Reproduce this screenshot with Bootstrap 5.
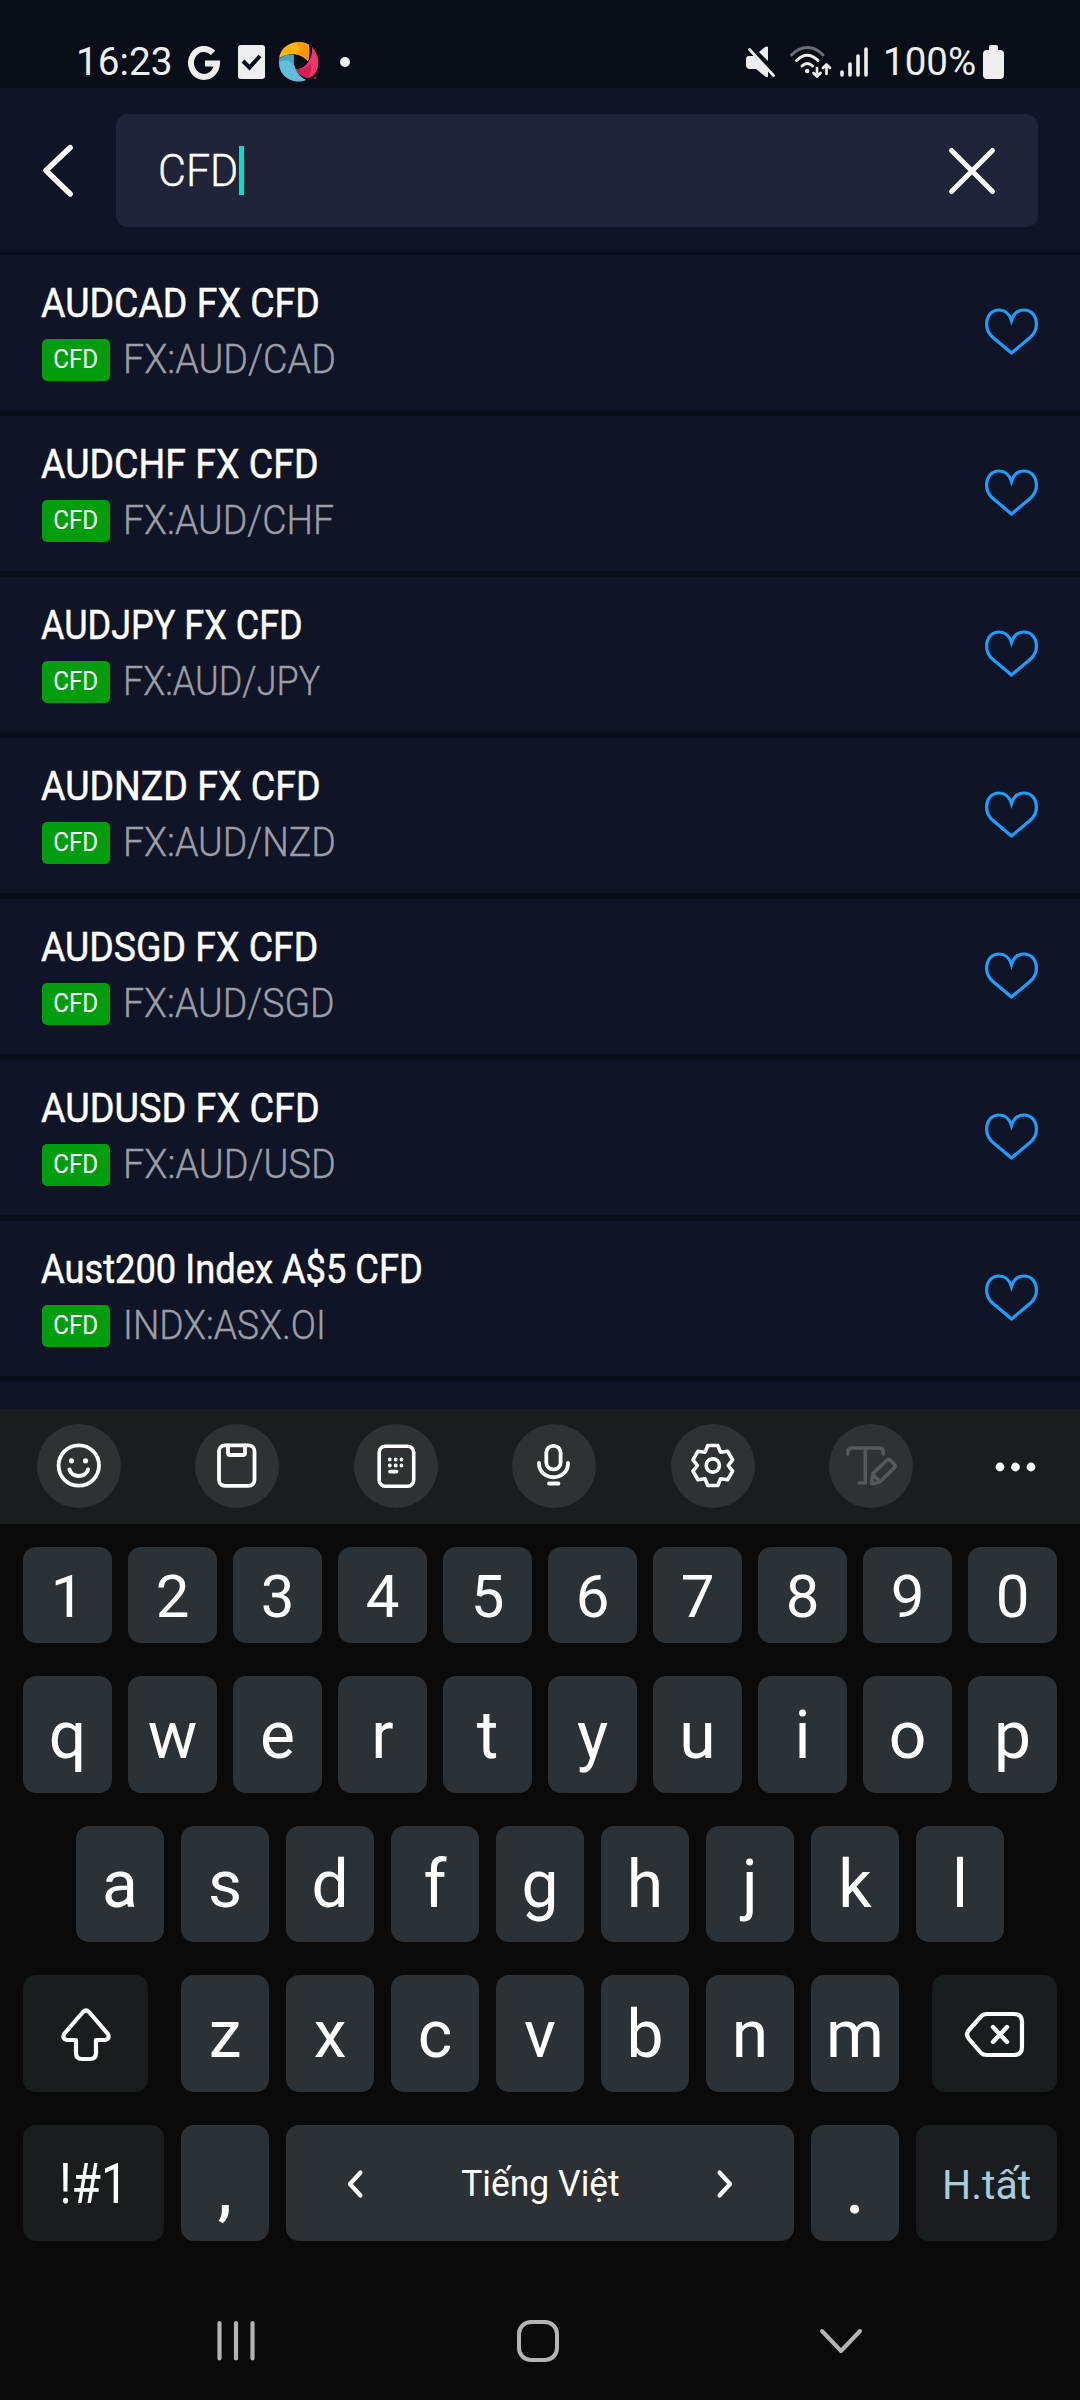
<!DOCTYPE html>
<html lang="vi">
<head>
<meta charset="utf-8">
<meta name="viewport" content="width=device-width, initial-scale=1">
<title>CFD search</title>
<link rel="stylesheet" href="https://cdn.jsdelivr.net/npm/bootstrap@5.3.0/dist/css/bootstrap.min.css">
<style>
body{width:1080px;height:2400px;margin:0;background:#0a0a0a;color:#fff;font-family:Roboto,"Liberation Sans",sans-serif;overflow:hidden;line-height:1.172}
svg{display:block;flex:none;overflow:visible}
.ln{fill:none;stroke:currentColor;stroke-linecap:round;stroke-linejoin:round}
.statusbar{height:88px;background:#0a0e18;color:#eee;font-size:39.5px;padding:36px 76px 0 76px}
.statusbar .inner-row{height:52px}
.searchbar{height:167px;background:#0f1426;border-bottom:3px solid #0a0e18;padding:26px 42px 25px 43px}
.search-box{width:922px;height:113px;background:#202438;border-radius:12px;padding:0 43px 0 42px}
.query{font-size:45px;font-weight:300;-webkit-text-stroke:.4px #fff;border:0;display:inline-block;width:81px;padding-top:2px;transform:scaleX(.955);transform-origin:left}
.caret{width:5px;height:49px;background:#00e0c8}
.results{height:1154px;overflow:hidden;background:#0f1426}
.result{height:161px;border-bottom:6px solid #0a0e18;padding:25px 42px 0 42px}
.narrow{display:inline-block;white-space:nowrap;transform-origin:left}
.title{font-size:40.5px;line-height:47px;margin-left:-1px;-webkit-text-stroke:.5px #fff}
.ticker{font-size:40.5px;line-height:47px;font-weight:300;color:#9c9ea6;-webkit-text-stroke:.4px #9c9ea6;margin-left:13px}
.tag{width:68px;height:42px;border-radius:5px;background:#009e0e;font-size:25.5px}
.tag span{transform:scaleX(.95)}
.heart{color:#1e9fff;margin-top:28px}
.toolbar-strip{height:115px;background:#191d1d;padding:15px 37px 0 37px}
.tool{width:84px;height:84px;border-radius:50%;background:#2f3232;margin-right:74.4px;flex:none}
.tool svg{width:84px;height:84px}
.keys{padding:23px 23px 0}
.krow{margin-bottom:33px;height:116px}
.key{background:#2c3135;border-radius:13px;width:88px;height:100%;font-size:66px;padding-top:2px;display:flex;align-items:center;justify-content:center;flex:none}
.digits{height:96px}
.digits .key{font-size:60px;padding-top:5px}
.wide10 .key{width:89px}
.fnkey{background:#191d1d}
.krow .w125{width:125px}.krow .w141{width:141px}.krow .w508{width:508px}
.g16{gap:16px}.g17{gap:17px}
.krow .punct{padding-top:16px;font-weight:500}
.softnav{color:#b4b4b4;height:126px;padding:46px 0 0 217px}
</style>
<script src="https://cdn.jsdelivr.net/npm/bootstrap@5.3.0/dist/js/bootstrap.bundle.min.js"></script>
</head>
<body>
<div class="statusbar">
 <div class="inner-row d-flex align-items-center justify-content-between">
  <div class="d-flex align-items-center">
   <span class="narrow" style="width:112px;transform:scaleX(.98)">16:23</span>
   <svg width="33" height="34" viewBox="0 0 33 34"><path class="ln" style="stroke-linecap:butt;stroke-linejoin:miter" stroke-width="6" d="M25 7.800A13 14 0 1 0 29 18.500H17"/></svg>
   <svg width="27" height="34" viewBox="0 0 27 34" style="margin-left:17px"><rect width="27" height="34" rx="3" fill="#eee"/><path d="M5 16L11.500 22.500L22 11" fill="none" stroke="#0a0e18" stroke-width="4"/></svg>
   <svg width="40" height="40" viewBox="0 0 40 40" style="margin-left:14px"><path fill="#fdb412" d="M0 16C2 5 11 0 20 0Q26 0 30 3Q31 12 29 19C21 10 9 11 0 16Z"/><path fill="#ff9800" d="M17 0Q26 0 30 3Q31 12 29 19Q24 14 17 12Q24 7 17 0Z"/><path fill="#ef346f" d="M33 5C40 12 41 23 37 30Q34 35 29 36Q21 35 16.500 27C24 28 34 20 33 5Z"/><path fill="#d42050" d="M16.500 27Q25 28 32 22Q33 30 29 36Q21 35 16.500 27Z"/><path fill="#61bfdb" d="M0 17Q7 12 15 13C13 22 17 33 27 38C15 43 0 35 0 21Z"/><path fill="#43a7c2" d="M0 17Q7 12 15 13Q14 18 15 24Q9 15 0 20Z"/><path d="M35 36h2.500" stroke="#d42050" stroke-width="1.500"/></svg>
   <svg width="10" height="10" style="margin-left:21px"><circle cx="5" cy="5" r="5" fill="#eee"/></svg>
  </div>
  <div class="d-flex align-items-center">
   <svg width="30" height="32" viewBox="0 0 30 32"><path fill="#eee" d="M3 10H8L22 24V31H20L10 23H3Q0 22 0 19V13Q0 10 3 10ZM13 6L19 1Q21 0 22 1V15Z"/><path class="ln" stroke-width="2.800" d="M3.500 3.500L27.500 29.500"/></svg>
   <svg width="42" height="32" viewBox="0 0 42 32" style="margin-left:14px"><g class="ln" stroke-width="3"><path stroke="#6c6e74" d="M1.500 9C11 -1 24 -1 33 9"/><path d="M6.500 14.500Q17.200 4 28 14.500M12 20Q17.200 15 22.500 20"/></g><circle cx="17.200" cy="25" r="2.200" fill="#eee"/><path class="ln" stroke-width="2.700" d="M27 22V30M23.500 27L27 30.500L30.500 27M36.500 28V19M33 22L36.500 18.500L40 22"/></svg>
   <svg width="28" height="32" viewBox="0 0 28 32" style="margin-left:8px"><path class="ln" stroke-width="3.600" d="M2 26V29M10 18V29M18 10V29M26 3V29"/></svg>
   <span class="narrow" style="margin-left:15px;width:100px;transform:scaleX(.975)">100%</span>
   <svg width="21" height="34" viewBox="0 0 21 34"><path fill="#eee" d="M6 5V2Q6 0 8 0H13Q15 0 15 2V5H17Q21 5 21 9V30Q21 34 17 34H4Q0 34 0 30V9Q0 5 4 5Z"/></svg>
  </div>
 </div>
</div>

<div class="searchbar d-flex align-items-center justify-content-between">
 <svg width="30" height="52" viewBox="0 0 30 52"><path class="ln" stroke-width="5.400" d="M27.200 2.500L3 25.500L27.200 49"/></svg>
 <div class="search-box d-flex align-items-center justify-content-between">
  <div class="d-flex align-items-center"><span class="query">CFD</span><span class="caret"></span></div>
  <svg width="46" height="46" viewBox="0 0 46 46"><path class="ln" stroke-width="5" d="M2.500 2.500L43.500 43.500M43.500 2.500L2.500 43.500"/></svg>
 </div>
</div>

<div class="results" id="results"></div>

<div class="toolbar-strip d-flex">
 <div class="tool"><svg viewBox="0 0 84 84"><g class="ln" stroke-width="3.800"><circle cx="41.800" cy="41.500" r="20.200"/><path d="M32.500 45.500C34.500 54 49 54 51 45.500" stroke-width="4"/></g><circle cx="34.500" cy="36.800" r="2.600" fill="#fff"/><circle cx="48.500" cy="36.800" r="2.600" fill="#fff"/></svg></div>
 <div class="tool"><svg viewBox="0 0 84 84"><g class="ln" stroke-width="3.800"><rect x="24" y="21.300" width="35.500" height="40.500" rx="6"/><path d="M33 21.500V29Q33 31 35 31H48Q50 31 50 29V21.500"/></g></svg></div>
 <div class="tool"><svg viewBox="0 0 84 84"><rect class="ln" stroke-width="3.600" x="25.200" y="22.300" width="34.500" height="40" rx="6"/><path class="ln" stroke-width="3.800" d="M35.800 35.500h.01M41.700 35.500h.01M47.500 35.500h.01M35.800 41.500h.01M41.700 41.500h.01M47.500 41.500h.01M36 47.600H42.500"/></svg></div>
 <div class="tool"><svg viewBox="0 0 84 84"><g class="ln" stroke-width="3.800"><rect x="34.300" y="21.800" width="14.300" height="23.500" rx="6.800"/><path d="M27 39C27 58 56 58 56 39M37 59.500H46.500"/></g></svg></div>
 <div class="tool"><svg viewBox="0 0 84 84"><g class="ln" stroke-width="3.600" transform="translate(41.800 41.500)"><path d="M-5 -20H5L7.700 -13.300L14.800 -14.300L19.800 -5.700L15.400 0L19.800 5.700L14.800 14.300L7.700 13.300L5 20H-5L-7.700 13.300L-14.800 14.300L-19.800 5.700L-15.400 0L-19.800 -5.700L-14.800 -14.300L-7.700 -13.300Z"/><circle r="6.600"/></g></svg></div>
 <div class="tool"><svg viewBox="0 0 84 84" style="color:#565859"><g class="ln" stroke-width="3.600"><path d="M18.800 30V28Q18.800 24 23 24H50Q54.200 24 54.200 28V30M36.300 24V59M29.800 59H36.300M42.500 59.500L44 49.500L57.500 36.500Q59.500 34.500 61.500 36.500L65 40Q67 42 65 44L52 57Q50 59 42.500 59.500ZM44.500 51L50.500 57"/></g></svg></div>
 <svg width="84" height="84" viewBox="0 0 84 84" style="margin-left:-13.500px"><g fill="#fff"><circle cx="26" cy="43" r="4.400"/><circle cx="41.500" cy="43" r="4.400"/><circle cx="57" cy="43" r="4.400"/></g></svg>
</div>

<div class="keys">
 <div class="krow digits wide10 d-flex g16" data-keys="1234567890"></div>
 <div class="krow wide10 d-flex g16" data-keys="qwertyuiop" style="height:117px"></div>
 <div class="krow d-flex justify-content-center g17" data-keys="asdfghjkl"></div>
 <div class="krow d-flex justify-content-between" style="height:117px">
  <div class="key fnkey w125"><svg width="50" height="54" viewBox="0 0 50 54"><path class="ln" stroke-width="4.200" d="M22 4Q25 1 28 4L47 26Q49 31 44 32H35V45Q35 51 29 51H21Q15 51 15 45V32H6Q1 31 3 26Z"/></svg></div>
  <div class="d-flex g17" data-keys="zxcvbnm"></div>
  <div class="key fnkey w125"><svg width="60" height="46" viewBox="0 0 60 46"><path class="ln" stroke-width="4.200" d="M22 2H49Q57 2 57 10V35Q57 43 49 43H22Q18 43 16 41L4 27Q0 22.500 4 18L16 4.500Q18 2 22 2Z"/><path class="ln" stroke-width="4.400" d="M28 15L42 30M42 15L28 30"/></svg></div>
 </div>
 <div class="krow d-flex g17">
  <div class="key fnkey w141" style="font-size:55px"><span class="narrow" style="transform:scaleX(.87);transform-origin:center">!#1</span></div>
  <div class="key punct">,</div>
  <div class="key w508" style="font-size:36px;gap:97px">
   <svg width="16" height="28" viewBox="0 0 16 28"><path class="ln" stroke-width="4.200" d="M13.500 2.500L3 14L13.500 25.500"/></svg>
   <span class="narrow" style="transform:scaleX(.985);transform-origin:center">Tiếng Việt</span>
   <svg width="16" height="28" viewBox="0 0 16 28"><path class="ln" stroke-width="4.200" d="M2.500 2.500L13 14L2.500 25.500"/></svg>
  </div>
  <div class="key punct">.</div>
  <div class="key fnkey w141" style="font-size:41px;color:#a9cbdd;padding-top:4px">H.tất</div>
 </div>
</div>

<div class="softnav d-flex">
 <svg width="38" height="42" viewBox="0 0 38 42"><path class="ln" stroke-width="4.200" d="M2.500 3V38.500M19 3V38.500M35.500 3V38.500"/></svg>
 <svg width="42" height="42" viewBox="0 0 42 42" style="margin-left:262px"><rect class="ln" stroke-width="4" x="2" y="2" width="38" height="38" rx="12"/></svg>
 <svg width="42" height="42" viewBox="0 0 42 42" style="margin-left:261px"><path class="ln" stroke-width="4" d="M2 11L21 31L40 11"/></svg>
</div>

<script>
/* name, symbol, horizontal scale of each */
const rows=[["AUDCAD FX CFD","FX:AUD/CAD",.925,.932],["AUDCHF FX CFD","FX:AUD/CHF",.926,.926],["AUDJPY FX CFD","FX:AUD/JPY",.889,.889],["AUDNZD FX CFD","FX:AUD/NZD",.926,.926],["AUDSGD FX CFD","FX:AUD/SGD",.923,.926],["AUDUSD FX CFD","FX:AUD/USD",.932,.935],["Aust200 Index A$5 CFD","INDX:ASX.OI",.896,.918]];
document.getElementById("results").innerHTML=rows.map(([t,s,a,b])=>`<div class="result d-flex justify-content-between"><div><div class="narrow title" style="transform:scaleX(${a})">${t}</div><div class="d-flex align-items-center" style="margin-top:9px"><span class="tag d-flex align-items-center justify-content-center"><span class="narrow" style="transform-origin:center">CFD</span></span><span class="narrow ticker" style="transform:scaleX(${b})">${s}</span></div></div><svg class="heart" width="53" height="48" viewBox="0 0 53 48"><path class="ln" stroke-width="3.200" style="stroke-linejoin:miter" d="M26.500 45L8 29.500C4 26 1.600 21.500 1.600 16.500C1.600 8 6.500 2 14 2C20.500 2 24.500 6 26.500 12.500C28.500 6 32.500 2 39 2C46.500 2 51.400 8 51.400 16.500C51.400 21.500 49 26 45 29.500Z"/></svg></div>`).join("");
document.querySelectorAll("[data-keys]").forEach(r=>{r.innerHTML=[...r.dataset.keys].map(k=>`<div class="key">${k}</div>`).join("")});
</script>
</body>
</html>
